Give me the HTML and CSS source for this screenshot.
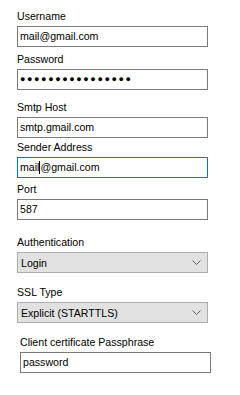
FILE: index.html
```html
<!DOCTYPE html>
<html lang="en">
<head>
    <meta charset="UTF-8">
    <meta name="viewport" content="width=device-width, initial-scale=1.0">
    <title>Mail Settings</title>
    <link rel="stylesheet" href="styles.css">
</head>
<body>
    <div class="settings">
        <div class="field field-user">
            <div class="label">Username</div>
            <div class="textbox">mail@gmail.com</div>
        </div>
        <div class="field field-pass">
            <div class="label">Password</div>
            <div class="textbox secret">&#9679;&#9679;&#9679;&#9679;&#9679;&#9679;&#9679;&#9679;&#9679;&#9679;&#9679;&#9679;&#9679;&#9679;&#9679;&#9679;</div>
        </div>
        <div class="field field-host">
            <div class="label">Smtp Host</div>
            <div class="textbox">smtp.gmail.com</div>
        </div>
        <div class="field field-sender">
            <div class="label">Sender Address</div>
            <div class="textbox focused">mail<span class="caret"></span>@gmail.com</div>
        </div>
        <div class="field field-port">
            <div class="label">Port</div>
            <div class="textbox">587</div>
        </div>
        <div class="field field-auth">
            <div class="label">Authentication</div>
            <div class="combo">
                <span>Login</span>
                <svg class="chevron" width="9" height="5" viewBox="0 0 9 5"><polyline points="0.5,0.5 4.5,4.5 8.5,0.5" fill="none" stroke="#606060" stroke-width="1"/></svg>
            </div>
        </div>
        <div class="field field-ssl">
            <div class="label">SSL Type</div>
            <div class="combo">
                <span>Explicit (STARTTLS)</span>
                <svg class="chevron" width="9" height="5" viewBox="0 0 9 5"><polyline points="0.5,0.5 4.5,4.5 8.5,0.5" fill="none" stroke="#606060" stroke-width="1"/></svg>
            </div>
        </div>
        <div class="field field-cert">
            <div class="label">Client certificate Passphrase</div>
            <div class="textbox">password</div>
        </div>
    </div>
</body>
</html>
```

FILE: styles.css
```css
* {
    box-sizing: border-box;
    margin: 0;
    padding: 0;
}

body {
    background: #ffffff;
    color: #000000;
    font-family: 'Liberation Sans', Arial, sans-serif;
    font-size: 10.6px;
}

.settings {
    display: flex;
    flex-direction: column;
    width: 240px;
    padding: 10px 0 0 17px;
}

.field {
    display: flex;
    flex-direction: column;
    gap: 3px;
    width: 191px;
}

.label {
    height: 13px;
    line-height: 13px;
}

.textbox {
    height: 21px;
    line-height: 19px;
    padding-left: 2px;
    border: 1px solid #7a7a7a;
    background: #ffffff;
    white-space: nowrap;
    overflow: hidden;
}

.textbox.focused {
    border-color: #0078d7;
}

.secret {
    font-size: 9px;
    letter-spacing: 1.6px;
}

.caret {
    display: inline-block;
    width: 1px;
    height: 13px;
    margin: 0 0 -3px;
    background: #000000;
    vertical-align: baseline;
}

.combo {
    display: flex;
    align-items: center;
    justify-content: space-between;
    height: 21px;
    padding: 0 6px 0 3px;
    border: 1px solid #adadad;
    background: #e1e1e1;
}

.field-pass { margin-top: 6px; }
.field-host { margin-top: 11px; }
.field-sender { margin-top: 3px; }
.field-port { margin-top: 5px; }
.field-auth { margin-top: 16px; }
.field-ssl { margin-top: 13px; }

.field-cert {
    margin-top: 13px;
    margin-left: 3px;
}
```
